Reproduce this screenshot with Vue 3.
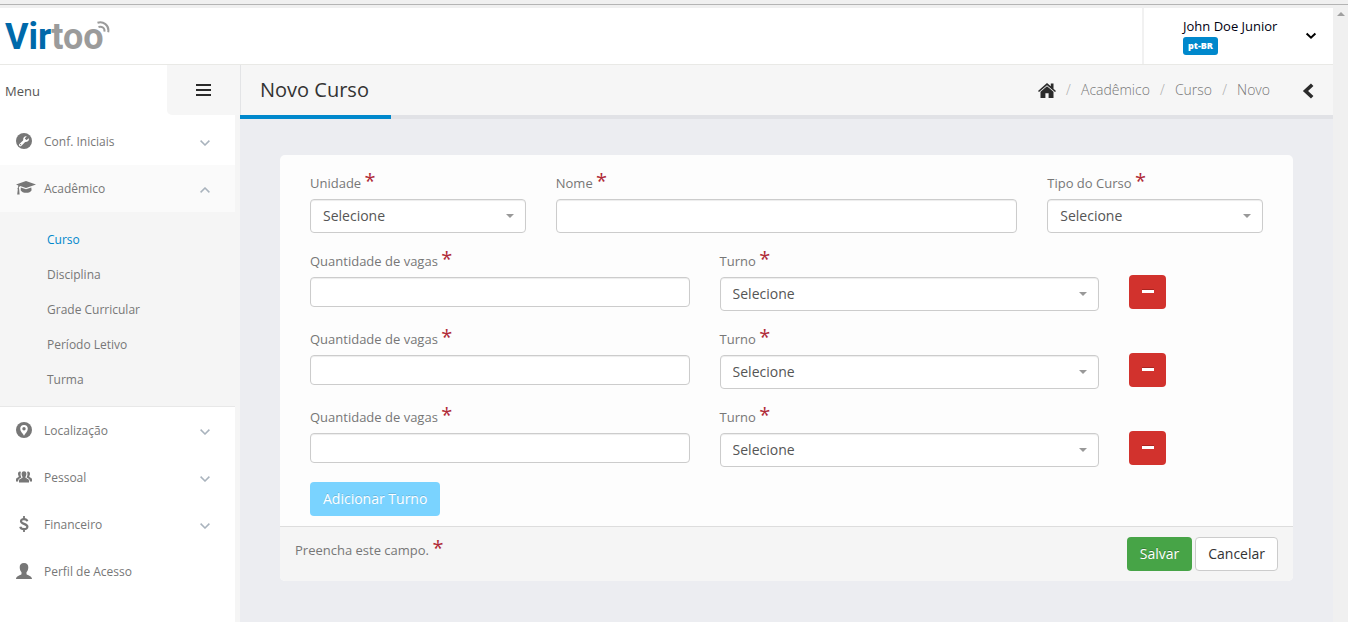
<script setup>
import { ref } from 'vue'

const menu = [
  { label: 'Conf. Iniciais', icon: 'wrench', arrow: true },
  {
    label: 'Acadêmico',
    icon: 'cap',
    arrow: true,
    open: true,
    children: ['Curso', 'Disciplina', 'Grade Curricular', 'Período Letivo', 'Turma'],
  },
  { label: 'Localização', icon: 'pin', arrow: true },
  { label: 'Pessoal', icon: 'group', arrow: true },
  { label: 'Financeiro', icon: 'dollar', arrow: true },
  { label: 'Perfil de Acesso', icon: 'user', arrow: false },
]
const crumbs = ['Acadêmico', 'Curso', 'Novo']
const activeChild = 'Curso'
const nextId = ref(4)
const shifts = ref([1, 2, 3])

function addShift() {
  shifts.value.push(nextId.value++)
}
function removeShift(id) {
  shifts.value = shifts.value.filter((s) => s !== id)
}
</script>

<template>
  <div class="window">
    <div class="topline"></div>
    <div class="viewport">
      <div class="app">
        <header class="header">
          <a class="logo" href="#" aria-label="Virtoo">
            <span class="logo-a">Vir</span><span class="logo-b">too</span>
            <svg class="waves" viewBox="0 0 14 14" width="14" height="14" fill="none" stroke="#9b9b9b" stroke-width="2">
              <path d="M1.500 1.800C7-.2 13.600 4.200 12.200 11.200" />
              <path d="M2.500 6C5.700 4.800 9.100 7 8.400 10.600" />
            </svg>
          </a>
          <div class="user">
            <div class="who">
              <span class="name">John Doe Junior</span>
              <span class="badge">pt-BR</span>
            </div>
            <button class="plain" type="button" aria-label="Conta">
              <svg viewBox="0 0 12 8" width="12" height="8" fill="none" stroke="#000" stroke-width="2"><path d="M1.600 1.500L6 5.700L10.400 1.500" /></svg>
            </button>
          </div>
        </header>

        <div class="main">
          <aside class="sidebar">
            <div class="side-head">
              <span class="side-title">Menu</span>
              <button class="toggle" type="button" aria-label="Alternar menu">
                <svg viewBox="0 0 15 12" width="15" height="12" fill="#2b2b2b"><path d="M0 0h15v2H0zM0 5h15v2H0zM0 10h15v2H0z" /></svg>
              </button>
            </div>
            <nav class="nav">
              <template v-for="item in menu" :key="item.label">
                <a href="#" class="item" :class="{ open: item.open }">
                  <span class="ico">
                    <svg v-if="item.icon === 'wrench'" viewBox="0 0 16 16" width="16" height="16">
                      <circle cx="8" cy="8" r="8" fill="#777" />
                      <path d="M4.300 12L9 7.300" stroke="#fff" stroke-width="2.600" stroke-linecap="round" />
                      <path d="M12.700 5.200L10.700 7L9.100 6.800L8.900 5.300L10.800 3.300C8.900 2.600 7 4.200 7.200 6.300L7.600 8.400L9.800 8.900C12 9 13.500 7 12.700 5.200Z" fill="#fff" />
                      <circle cx="4.600" cy="11.600" r=".6" fill="#777" />
                    </svg>
                    <svg v-else-if="item.icon === 'cap'" class="wide" viewBox="0 0 20 14" width="20" height="14" fill="#777">
                      <path d="M10 0L20 3.500L10 7L4.200 5L2.800 6.200L3.200 8.500L3.600 13.500H1.200L1.800 8.500L1.400 7.500L2 6.500L2.300 4.400L0 3.500Z" />
                      <path d="M4.800 6.400L10 8.200L15.300 6.400L15.600 9.300C14.500 12.700 6 12.700 4.700 9.300Z" />
                    </svg>
                    <svg v-else-if="item.icon === 'pin'" viewBox="0 0 16 16" width="16" height="16">
                      <circle cx="8" cy="8" r="8" fill="#777" />
                      <path d="M8 13.800C6.900 11.200 4.200 9.500 4.200 6.700A3.800 3.800 0 0 1 11.800 6.700C11.800 9.500 9.100 11.200 8 13.800Z" fill="#fff" />
                      <circle cx="8" cy="6.800" r="1.700" fill="#777" />
                    </svg>
                    <svg v-else-if="item.icon === 'group'" viewBox="0 0 16 12" width="16" height="12" fill="#777">
                      <path d="M5.600 2.700C5.600-.6 10.400-.6 10.400 2.700C10.400 4.500 9.700 5.300 9.400 6.200C9.500 7.500 13 7.500 13 9.500V11.500H3V9.500C3 7.500 6.500 7.500 6.600 6.200C6.300 5.300 5.600 4.500 5.600 2.700Z" />
                      <path d="M4.900 1C3.500-.1 2 1 2 2.800C2 4.400 2.800 4.800 2.800 5.600C2.500 6.900 0 6.700 0 8.500V10.400H2.100C2 8.300 3.200 7.500 5.400 6.500C4.300 4.500 4.300 3 4.900 1Z" />
                      <path d="M11.100 1C12.500-.1 14 1 14 2.800C14 4.400 13.200 4.800 13.200 5.600C13.500 6.900 16 6.700 16 8.500V10.400H13.900C14 8.300 12.800 7.500 10.600 6.500C11.700 4.500 11.700 3 11.100 1Z" />
                    </svg>
                    <svg v-else-if="item.icon === 'dollar'" viewBox="0 0 10 16" width="10" height="16" fill="none" stroke="#777" stroke-width="2.200">
                      <path d="M5 0V3M5 13V16" stroke-width="1.800" />
                      <path d="M8.300 5.200C7.600 2.500 2 2.300 2 5.300C2 8.500 8.400 7.200 8.400 10.800C8.400 14 2 13.900 1.300 10.700" />
                    </svg>
                    <svg v-else viewBox="0 0 16 16" width="16" height="16" fill="#777">
                      <path d="M8 0C11 0 12.300 1.800 12.300 4.200C12.300 6.500 11.500 8 10.500 9.300V11.200C12 12.500 16 12.800 16 16H0C0 12.800 4 12.500 5.500 11.200V9.300C4.500 8 3.700 6.500 3.700 4.200C3.700 1.800 5 0 8 0Z" />
                    </svg>
                  </span>
                  <span class="text">{{ item.label }}</span>
                  <svg v-if="item.arrow" class="caret" viewBox="0 0 10 6" width="10" height="6" fill="none" stroke="#a9b3bd" stroke-width="1.500">
                    <path :d="item.open ? 'M.6 5.400L5 1L9.400 5.400' : 'M.6 .6L5 5L9.400 .6'" />
                  </svg>
                </a>
                <div v-if="item.children" class="sub">
                  <a v-for="c in item.children" :key="c" href="#" :class="{ active: c === activeChild }">{{ c }}</a>
                </div>
              </template>
            </nav>
          </aside>

          <main class="content">
            <div class="page-head">
              <h1>Novo Curso</h1>
              <div class="crumbs">
                <a href="#" aria-label="Início" class="home">
                  <svg viewBox="0 0 18 15" width="18" height="15" fill="#2b2b2b">
                    <path d="M9 0L12.800 3.300V.6H15.500V5.700L18 7.900L17 9L9 2.200L1 9L0 7.900Z" />
                    <path d="M9 3.300L15.500 8.800V15H10.600V10.300H7.400V15H2.500V8.800Z" />
                  </svg>
                </a>
                <template v-for="c in crumbs" :key="c"><i>/</i><a class="crumb" href="#">{{ c }}</a></template>
                <button class="plain back" type="button" aria-label="Abrir painel">
                  <svg viewBox="0 0 12 16" width="12" height="16" fill="none" stroke="#2b2b2b" stroke-width="3.600"><path d="M10.200 1.700L3.500 8L10.200 14.300" /></svg>
                </button>
              </div>
            </div>

            <form class="card" @submit.prevent>
              <div class="body">
                <div class="row">
                  <div class="field s3">
                    <label for="unidade">Unidade <b>*</b></label>
                    <span class="pick"><select id="unidade"><option>Selecione</option></select></span>
                  </div>
                  <div class="field s6">
                    <label for="nome">Nome <b>*</b></label>
                    <input id="nome" class="tall" type="text" />
                  </div>
                  <div class="field s3">
                    <label for="tipo">Tipo do Curso <b>*</b></label>
                    <span class="pick"><select id="tipo"><option>Selecione</option></select></span>
                  </div>
                </div>
                <div v-for="s in shifts" :key="s" class="row">
                  <div class="field s5">
                    <label :for="'vagas' + s">Quantidade de vagas <b>*</b></label>
                    <input :id="'vagas' + s" type="text" />
                  </div>
                  <div class="field s5">
                    <label :for="'turno' + s">Turno <b>*</b></label>
                    <span class="pick"><select :id="'turno' + s"><option>Selecione</option></select></span>
                  </div>
                  <div class="s2">
                    <button class="btn remove" type="button" aria-label="Remover turno" @click="removeShift(s)">
                      <svg viewBox="0 0 12 4" width="12" height="4"><path d="M0 0h12v4H0z" fill="#fff" /><path d="M0 0h12v1H0z" fill="#a82420" /></svg>
                    </button>
                  </div>
                </div>
                <button class="btn add" type="button" @click="addShift">Adicionar Turno</button>
              </div>
              <div class="foot">
                <span class="hint">Preencha este campo. <b>*</b></span>
                <button class="btn save" type="submit">Salvar</button>
                <button class="btn cancel" type="button">Cancelar</button>
              </div>
            </form>
          </main>
        </div>
      </div>
      <div class="scroll"><span></span></div>
    </div>
  </div>
</template>

<style>
body {
  background: #ecedf1;
}
</style>

<style scoped>
.window,
.window * {
  box-sizing: border-box;
}
.window {
  display: flex;
  flex-direction: column;
  min-height: 100vh;
  font-family: "Open Sans", "Noto Sans", sans-serif;
  font-size: 13px;
  color: #777;
}
a {
  color: inherit;
  text-decoration: none;
}
svg {
  display: block;
}
.topline {
  height: 8px;
  border-top: 4px solid #f0f0f0;
  background: linear-gradient(#b4b4b4 1px, #f0f0f0 1px);
}
.viewport {
  flex: 1;
  display: flex;
}
.app {
  flex: 1;
  min-width: 0;
  display: flex;
  flex-direction: column;
}
.scroll {
  width: 15px;
  padding: 4px;
  background: #f0f0f0;
}
.scroll span {
  display: block;
  border: 4px solid transparent;
  border-top: 0;
  border-bottom: 4px solid #a0a0a0;
}

.header {
  display: flex;
  justify-content: space-between;
  height: 57px;
  background: #fff;
  border-bottom: 1px solid #e9e9e6;
}
.logo {
  display: flex;
  align-items: flex-start;
  padding: 8px 0 0 5px;
  font: 700 36px/42px Roboto, "Open Sans", sans-serif;
}
.logo-a {
  color: #0069aa;
}
.logo-b {
  color: #9b9b9b;
}
.waves {
  margin: 5px 0 0 -8px;
}
.user {
  display: flex;
  justify-content: space-between;
  align-items: center;
  width: 191px;
  padding: 0 16px 0 39px;
  border-left: 2px solid #f1f1f1;
}
.who {
  display: flex;
  flex-direction: column;
  align-items: flex-start;
  gap: 2px;
}
.name {
  line-height: 18px;
  color: #000011;
}
.badge {
  padding: 0 5px;
  border-radius: 3px;
  background: #0088cc;
  color: #fff;
  font-weight: 800;
  font-size: 9px;
  line-height: 18px;
}
.plain {
  padding: 0;
  border: 0;
  background: none;
}

.main {
  flex: 1;
  display: flex;
}
.sidebar {
  flex: none;
  width: 240px;
  padding-right: 5px;
  background: #f5f5f5;
}
.side-head {
  display: flex;
  margin-right: -5px;
  height: 50px;
  background: #fff;
}
.side-title {
  flex: 1;
  padding-left: 5px;
  line-height: 52px;
  color: #555;
}
.toggle {
  width: 73px;
  padding: 0;
  border: 0;
  border-bottom-left-radius: 5px;
  background: #f6f6f6;
}
.toggle svg {
  margin: 0 auto;
}
.nav {
  min-height: calc(100% - 50px);
  padding-top: 3px;
  background: #fff;
}
.item {
  display: flex;
  align-items: center;
  height: 47px;
  padding: 0 25px 0 16px;
  font-size: 12px;
}
.item.open {
  background: #fafafa;
}
.ico {
  flex: none;
  display: flex;
  justify-content: center;
  width: 16px;
  margin-right: 12px;
  padding-bottom: 2px;
}
.ico svg {
  flex: none;
}
.ico .wide {
  margin-left: 3px;
}
.text {
  flex: 1;
}
.caret {
  margin-top: 3px;
}
.sub {
  padding: 10px 0 9px;
  background: #f5f5f5;
  border-bottom: 1px solid #e8e8e8;
}
.sub a {
  display: block;
  padding-left: 47px;
  font-size: 12px;
  line-height: 35px;
}
.sub a.active {
  color: #0088cc;
}

.content {
  flex: 1;
  min-width: 0;
  background: #ecedf1;
}
.page-head {
  display: flex;
  justify-content: space-between;
  height: 54px;
  background: #f6f6f6;
  border-bottom: 4px solid #e1e2e6;
}
h1 {
  height: 54px;
  margin: 0;
  padding: 0 22px 0 20px;
  border-bottom: 4px solid #0088cc;
  box-shadow: inset 1px 0 #e3e4e6;
  font-size: 20px;
  font-weight: 400;
  line-height: 50px;
  color: #333;
}
.crumbs {
  display: flex;
  align-items: center;
  padding-right: 19px;
  font-size: 14px;
  font-weight: 300;
}
.crumbs i {
  width: 25px;
  text-align: center;
  font-style: normal;
  color: #aaa;
}
.crumb,
.crumbs i {
  padding-bottom: 2px;
}
.back {
  margin-left: 32px;
  padding-top: 2px;
}

.card {
  margin: 36px 40px;
  border-radius: 5px;
  background: #fdfdfd;
  overflow: hidden;
}
.body {
  padding: 15px 30px 10px;
}
.row {
  display: grid;
  grid-template-columns: repeat(12, minmax(0, 1fr));
  column-gap: 30px;
  margin-bottom: 15px;
}
.s2 {
  grid-column: span 2;
}
.s3 {
  grid-column: span 3;
}
.s5 {
  grid-column: span 5;
}
.s6 {
  grid-column: span 6;
}
label {
  display: block;
  height: 24px;
  margin-bottom: 5px;
}
label,
.hint {
  line-height: 26px;
}
b {
  font-size: 20px;
  font-weight: 400;
  line-height: 0;
  color: #b02a37;
}
input,
select {
  display: block;
  width: 100%;
  height: 30px;
  padding: 0 12px 2px;
  border: 1px solid #ccc;
  border-radius: 4px;
  background: #fff;
  box-shadow: inset 0 1px 1px rgba(0, 0, 0, 0.075);
  font: 14px "Open Sans", "Noto Sans", sans-serif;
  color: #555;
}
select,
.tall {
  height: 34px;
}
select {
  appearance: none;
}
.pick {
  display: block;
  position: relative;
}
.pick::after {
  content: "";
  position: absolute;
  top: 15px;
  right: 12px;
  border: 4px solid transparent;
  border-top-color: #999;
  border-bottom: 0;
  pointer-events: none;
}
.btn {
  display: block;
  height: 34px;
  padding: 0 12px 2px;
  border: 1px solid transparent;
  border-radius: 4px;
  font: 14px "Open Sans", "Noto Sans", sans-serif;
  color: #fff;
  text-shadow: 0 -1px 0 rgba(0, 0, 0, 0.25);
}
.remove {
  width: 37px;
  margin-top: 27px;
  background: #d2322d;
}
.remove svg {
  margin: 0 auto;
}
.add {
  background: #7ad3ff;
  text-shadow: 0 -1px 0 rgba(0, 0, 0, 0.15);
}
.foot {
  display: flex;
  gap: 3px;
  padding: 10px 15px;
  border-top: 1px solid #ddd;
  background: #f5f5f5;
}
.hint {
  flex: 1;
}
.save {
  background: #47a447;
}
.cancel {
  border-color: #ccc;
  background: #fff;
  color: #333;
  text-shadow: none;
}
</style>
